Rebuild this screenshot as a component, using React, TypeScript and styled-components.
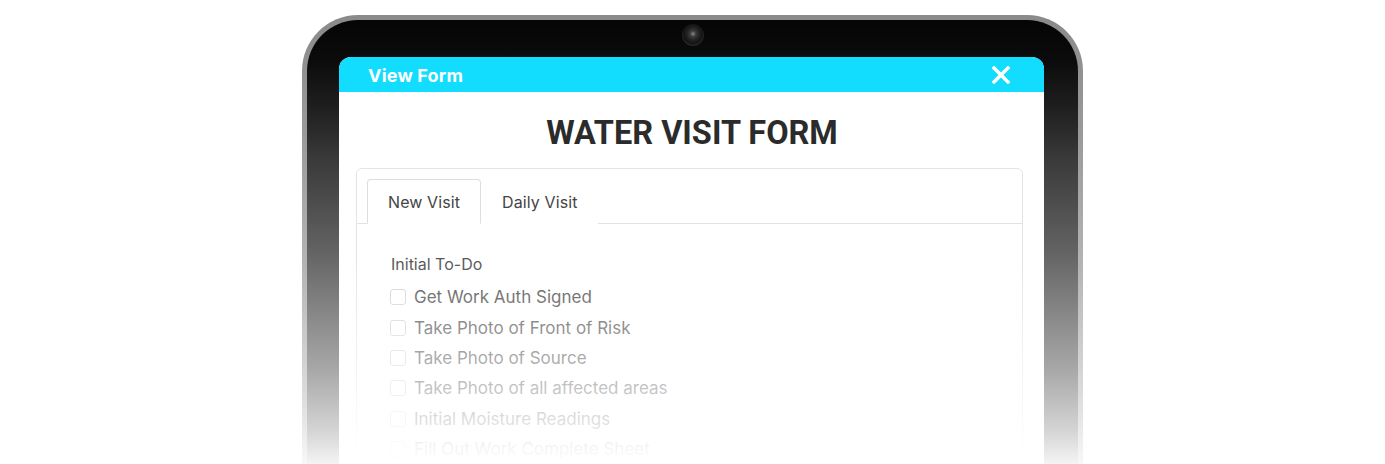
import React from "react";
import styled, { createGlobalStyle } from "styled-components";

const Global = createGlobalStyle`
  html, body { margin: 0; padding: 0; background: #fff; height: 464px; overflow: hidden; }
  body { font-family: Inter, "Noto Sans", sans-serif; }
  * { box-sizing: border-box; }
`;

const Page = styled.div`
  display: flex;
  justify-content: center;
  padding-top: 15px;
`;

const Rim = styled.div`
  width: 781px;
  height: 540px;
  padding: 5px;
  border-radius: 56px 56px 0 0;
  background: linear-gradient(to bottom, #8a8a8a 0px, #9a9a9a 120px, #b4b4b4 250px, #dcdcdc 380px, #f8f8f8 450px, #fff 470px);
`;

const Bezel = styled.div`
  height: 100%;
  border-radius: 51px 51px 0 0;
  padding: 0 34px 0 32px;
  display: flex;
  flex-direction: column;
  background: linear-gradient(
    to bottom,
    #050505 0px,
    #0b0b0b 40px,
    #202020 90px,
    #3a3a3a 140px,
    #626262 230px,
    #858585 290px,
    #a8a8a8 350px,
    #d4d4d4 410px,
    #f4f4f4 444px,
    #fff 460px
  );
`;

const CameraRow = styled.div`
  height: 37px;
  display: flex;
  justify-content: center;
  padding-top: 4px;
  padding-left: 2px;
`;

const Camera = styled.div`
  width: 22px;
  height: 22px;
  border-radius: 50%;
  background: radial-gradient(circle at 50% 45%, #8a8a8a 0px, #3a3a3a 3px, #1e1e1e 7px, #141414 10px, #262626 11px);
`;

const Screen = styled.div`
  position: relative;
  flex: 1;
  background: #fff;
  border-radius: 12px 12px 0 0;
  overflow: hidden;
  display: flex;
  flex-direction: column;
`;

const Fade = styled.div`
  position: absolute;
  inset: 0;
  pointer-events: none;
  background: linear-gradient(
    to bottom,
    rgba(255, 255, 255, 0) 200px,
    rgba(255, 255, 255, 0.5) 300px,
    rgba(255, 255, 255, 0.94) 391px,
    #fff 412px
  );
`;

const Header = styled.div`
  height: 35px;
  background: #13ddfe;
  display: flex;
  align-items: center;
  justify-content: space-between;
  padding: 1px 34px 0 29px;
`;

const HeaderTitle = styled.div`
  color: #fff;
  font-weight: 700;
  font-size: 18px;
  letter-spacing: 0.2px;
`;

const CloseButton = styled.button`
  border: 0;
  background: none;
  padding: 0;
  width: 18px;
  height: 18px;
  display: flex;
  cursor: pointer;
`;

const Title = styled.h1`
  margin: 0;
  padding: 22px 0 0 1px;
  height: 76px;
  text-align: center;
  font-family: Roboto, Inter, sans-serif;
  font-weight: 700;
  font-size: 32.5px;
  line-height: 38px;
  color: #2b2b2b;
`;

const Card = styled.div`
  margin: 0 21px 0 17px;
  border: 1px solid #e4e4e4;
  border-radius: 6px;
  flex: 1;
`;

const TabBar = styled.div`
  display: flex;
  padding: 10px 10px 0;
  border-bottom: 1px solid #e2e2e2;
`;

const Tab = styled.div<{ $active?: boolean }>`
  height: 45px;
  padding: 1px 20px 0;
  display: flex;
  align-items: center;
  font-size: 16px;
  letter-spacing: 0.1px;
  color: #444;
  margin-bottom: -1px;
  border: 1px solid ${(p) => (p.$active ? "#dedede" : "transparent")};
  border-bottom-color: ${(p) => (p.$active ? "#fff" : "transparent")};
  border-radius: 4px 4px 0 0;
  background: #fff;
`;

const Body = styled.div`
  padding: 30px 34px 0 33px;
`;

const SectionLabel = styled.div`
  font-size: 16px;
  line-height: 20px;
  color: #555;
  margin-bottom: 8px;
  padding-left: 1px;
`;

const Row = styled.label`
  display: flex;
  align-items: center;
  gap: 8px;
  height: 30.4px;
  font-size: 17px;
  color: #555;
`;

const Box = styled.span`
  width: 16px;
  height: 16px;
  border: 1px solid #d4d4d4;
  border-radius: 3px;
  background: #fff;
  flex: none;
`;

const items = [
  "Get Work Auth Signed",
  "Take Photo of Front of Risk",
  "Take Photo of Source",
  "Take Photo of all affected areas",
  "Initial Moisture Readings",
  "Fill Out Work Complete Sheet",
];

export default function App() {
  return (
    <>
      <Global />
      <Page>
        <Rim>
          <Bezel>
            <CameraRow>
              <Camera />
            </CameraRow>
            <Screen>
              <Header>
                <HeaderTitle>View Form</HeaderTitle>
                <CloseButton aria-label="Close">
                  <svg width="18" height="18" viewBox="0 0 18 18">
                    <path d="M2 2 L16 16 M16 2 L2 16" stroke="#fff" strokeWidth="3.4" strokeLinecap="square" />
                  </svg>
                </CloseButton>
              </Header>
              <Title>WATER VISIT FORM</Title>
              <Card>
                <TabBar>
                  <Tab $active>New Visit</Tab>
                  <Tab>Daily Visit</Tab>
                </TabBar>
                <Body>
                  <SectionLabel>Initial To-Do</SectionLabel>
                  {items.map((t) => (
                    <Row key={t}>
                      <Box />
                      {t}
                    </Row>
                  ))}
                </Body>
              </Card>
              <Fade />
            </Screen>
          </Bezel>
        </Rim>
      </Page>
    </>
  );
}
